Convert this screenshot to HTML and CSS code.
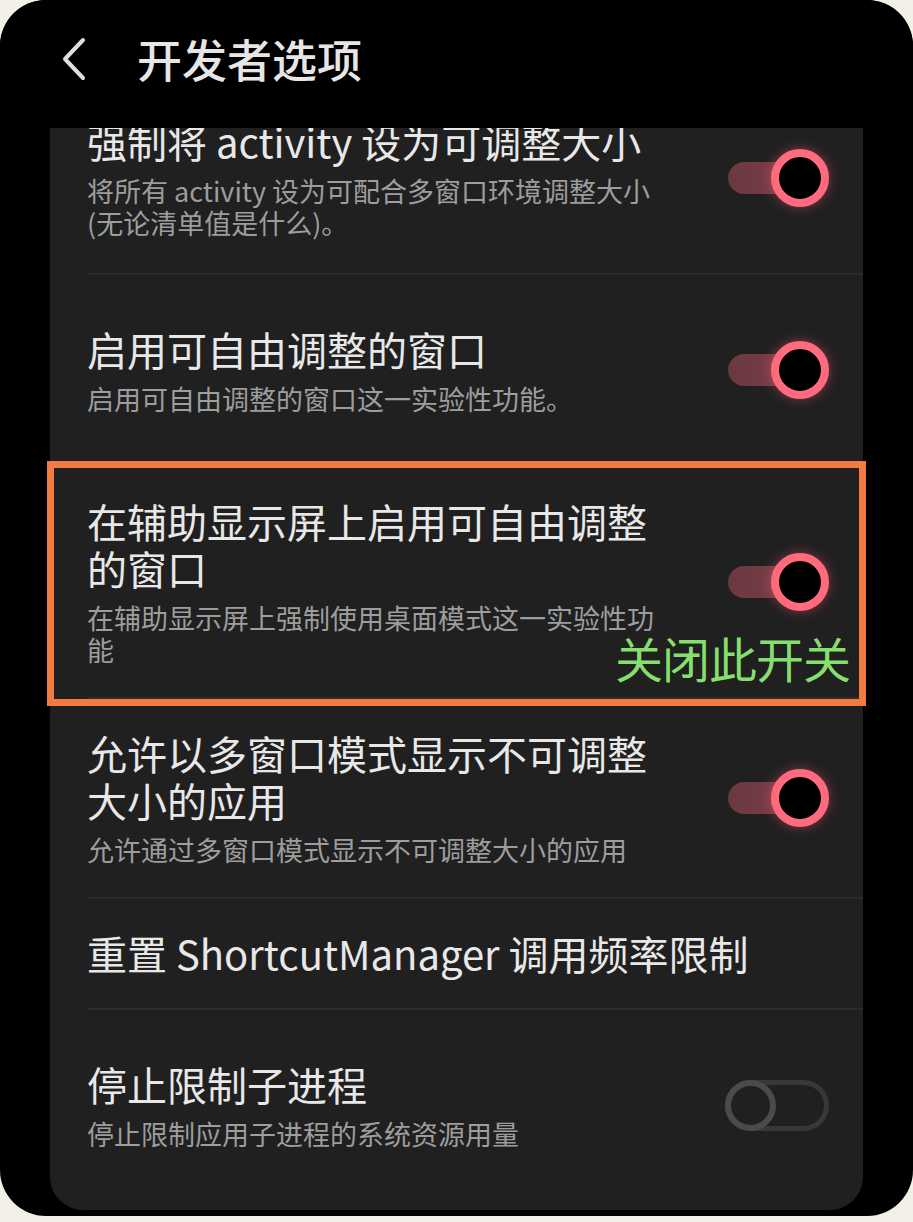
FILE: index.html
```html
<!DOCTYPE html>
<html>
<head>
    <title>开发者选项</title>
    <link rel="stylesheet" href="styles.css">
</head>
<body>
    <div class="phone">
        <div class="header">
            <svg class="back" width="26" height="44" viewBox="0 0 26 44">
                <polyline points="22,3 4,22 22,41" fill="none" stroke="#dedede" stroke-width="4" stroke-linecap="round" stroke-linejoin="round"/>
            </svg>
            <h1>开发者选项</h1>
        </div>

        <div class="card">
            <div class="row">
                <div class="text">
                    <div class="title">强制将 activity 设为可调整大小</div>
                    <div class="summary">将所有 activity 设为可配合多窗口环境调整大小 (无论清单值是什么)。</div>
                </div>
                <div class="switch on"><span class="track"></span><span class="thumb"></span></div>
            </div>
            <div class="divider"></div>

            <div class="row">
                <div class="text">
                    <div class="title">启用可自由调整的窗口</div>
                    <div class="summary">启用可自由调整的窗口这一实验性功能。</div>
                </div>
                <div class="switch on"><span class="track"></span><span class="thumb"></span></div>
            </div>
            <div class="divider"></div>

            <div class="row marked">
                <div class="text">
                    <div class="title">在辅助显示屏上启用可自由调整的窗口</div>
                    <div class="summary">在辅助显示屏上强制使用桌面模式这一实验性功能</div>
                </div>
                <div class="switch on"><span class="track"></span><span class="thumb"></span></div>
                <div class="note">关闭此开关</div>
            </div>
            <div class="divider"></div>

            <div class="row">
                <div class="text">
                    <div class="title">允许以多窗口模式显示不可调整大小的应用</div>
                    <div class="summary">允许通过多窗口模式显示不可调整大小的应用</div>
                </div>
                <div class="switch on"><span class="track"></span><span class="thumb"></span></div>
            </div>
            <div class="divider"></div>

            <div class="row plain">
                <div class="text">
                    <div class="title">重置 ShortcutManager 调用频率限制</div>
                </div>
            </div>
            <div class="divider"></div>

            <div class="row">
                <div class="text">
                    <div class="title">停止限制子进程</div>
                    <div class="summary">停止限制应用子进程的系统资源用量</div>
                </div>
                <div class="switch off"><span class="track"></span><span class="thumb"></span></div>
            </div>
        </div>
    </div>
</body>
</html>
```

FILE: styles.css
```css
body {
    margin: 0;
    padding: 0 0 6px 0;
    background: #f3f0e7;
    font-family: "Noto Sans CJK SC", "Noto Sans", sans-serif;
}

.phone {
    width: 913px;
    height: 1216px;
    background: #000;
    border-radius: 46px;
    overflow: hidden;
    display: flex;
    flex-direction: column;
}

.header {
    position: relative;
    z-index: 2;
    height: 128px;
    flex-shrink: 0;
    background: #000;
    display: flex;
    align-items: center;
    padding: 0 0 10px 61px;
    box-sizing: border-box;
}

.back {
    display: block;
}

h1 {
    margin: 0 0 0 50px;
    font-size: 45px;
    font-weight: 500;
    color: #e6e6e6;
    line-height: 50px;
}

.card {
    margin: -45px 50px 0 50px;
    padding-bottom: 10px;
    background: #202020;
    border-radius: 0 0 33px 33px;
}

.row {
    position: relative;
    display: flex;
    align-items: center;
    gap: 58px;
    min-height: 190px;
    padding: 31px 34px 31px 37px;
    box-sizing: border-box;
}

.row.plain {
    min-height: 0;
}

.text {
    flex: 1;
    min-width: 0;
}

.title {
    font-size: 40px;
    line-height: 47px;
    color: #e8e8e8;
}

.summary {
    margin-top: 10px;
    font-size: 27px;
    line-height: 32px;
    color: #9d9d9d;
}

.divider {
    height: 2px;
    margin-left: 37px;
    background: #2c2c2c;
}

.switch {
    position: relative;
    width: 104px;
    height: 58px;
    flex-shrink: 0;
}

.switch .track {
    position: absolute;
    left: 3px;
    top: 13px;
    width: 84px;
    height: 32px;
    border-radius: 16px;
    background: linear-gradient(90deg, #6a3840, #82404b);
}

.switch .thumb {
    position: absolute;
    right: 0;
    top: 0;
    width: 58px;
    height: 58px;
    box-sizing: border-box;
    border-radius: 50%;
    background: #000;
    border: 8px solid #ff6a7d;
    box-shadow: 0 0 12px rgba(255, 90, 110, 0.45);
}

.switch.off {
    height: 51px;
}

.switch.off .track {
    left: 0;
    top: 0;
    width: 104px;
    height: 51px;
    box-sizing: border-box;
    border: 5px solid #383838;
    border-radius: 26px;
    background: none;
}

.switch.off .thumb {
    left: 0;
    right: auto;
    width: 51px;
    height: 51px;
    border: 6px solid #4b4b4b;
    background: #202020;
    box-shadow: none;
}

.row.marked::after {
    content: "";
    position: absolute;
    top: -6px;
    bottom: -9px;
    left: -3px;
    right: -3px;
    border: 7px solid #f27b42;
    z-index: 1;
    pointer-events: none;
}

.note {
    position: absolute;
    right: 13px;
    top: 166px;
    font-size: 48px;
    line-height: 48px;
    color: #86df6c;
    letter-spacing: -1px;
}
```
